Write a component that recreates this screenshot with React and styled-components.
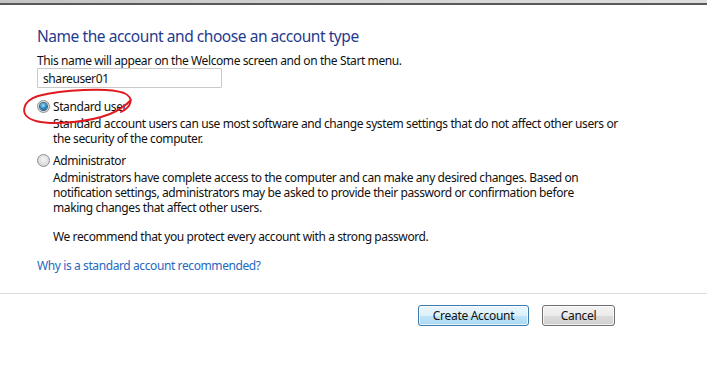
import React from "react";
import styled, { createGlobalStyle } from "styled-components";

const GlobalStyle = createGlobalStyle`
  html, body {
    margin: 0;
    padding: 0;
    background: #ffffff;
  }
  body {
    font-family: "Noto Sans", "Open Sans", "Liberation Sans", sans-serif;
    font-size: 12px;
    color: #111;
  }
`;

const Page = styled.div`
  position: relative;
  width: 707px;
  height: 377px;
  overflow: hidden;
  background: #fff;
`;

const TopEdge = styled.div`
  height: 3px;
  background: linear-gradient(to right, #c4c4c4, #d6d6d6 60%, #dedede);
  border-bottom: 2px solid #595959;
`;

const Content = styled.div`
  padding: 21px 0 0 37px;
  display: flex;
  flex-direction: column;
  align-items: flex-start;
`;

const Title = styled.h1`
  margin: 0;
  font-size: 15.5px;
  font-weight: 400;
  line-height: 21px;
  color: #1f3b8e;
  letter-spacing: -0.45px;
`;

const Hint = styled.p`
  margin: 6px 0 0;
  line-height: 15px;
  letter-spacing: -0.4px;
`;

const NameInput = styled.input`
  box-sizing: border-box;
  margin-top: 0;
  width: 185px;
  height: 20px;
  padding: 0 5px;
  border: 1px solid #c9c9c9;
  border-radius: 1px;
  font: inherit;
  letter-spacing: -0.4px;
  color: #111;
  outline: none;
`;

const Option = styled.div`
  display: flex;
  flex-direction: column;
  margin-top: ${(p) => p.$gap}px;
`;

const RadioRow = styled.label`
  display: flex;
  align-items: center;
  gap: 3px;
  line-height: 15px;
  letter-spacing: -0.4px;
`;

const Radio = styled.span`
  box-sizing: border-box;
  width: 13px;
  height: 13px;
  border-radius: 50%;
  border: 1px solid #8e8f8f;
  background: radial-gradient(circle at 50% 40%, #f4f4f4, #d5d5d5 80%);
  display: flex;
  align-items: center;
  justify-content: center;

  &::after {
    content: "";
    width: 7px;
    height: 7px;
    border-radius: 50%;
    display: ${(p) => (p.$checked ? "block" : "none")};
    background: radial-gradient(circle at 45% 35%, #a6e3f7, #1b7fc0 55%, #0d4a7e);
    box-shadow: 0 0 0 1px #3a5f80;
  }
`;

const Desc = styled.p`
  margin: 2px 0 0 16px;
  line-height: 15px;
  letter-spacing: -0.4px;
`;

const Note = styled.p`
  margin: 14px 0 0 16px;
  line-height: 15px;
  letter-spacing: -0.4px;
`;

const HelpLink = styled.a`
  margin-top: 14px;
  line-height: 15px;
  letter-spacing: -0.4px;
  color: #2767bf;
  text-decoration: none;
  cursor: pointer;
`;

const Divider = styled.hr`
  margin: 20px 0 0;
  border: 0;
  border-top: 1px solid #dcdcdc;
`;

const ButtonBar = styled.div`
  display: flex;
  justify-content: flex-end;
  gap: 13px;
  padding: 11px 92px 0 0;
`;

const Button = styled.button`
  box-sizing: border-box;
  height: 21px;
  min-width: ${(p) => p.$width}px;
  padding: 0 10px;
  border-radius: 3px;
  font: inherit;
  letter-spacing: -0.3px;
  color: #111;
  border: 1px solid ${(p) => (p.$primary ? "#3d7bad" : "#707070")};
  background: ${(p) =>
    p.$primary
      ? "linear-gradient(#ebf6fd, #dcf1fc 50%, #c1e5f8 50%, #aad8f1)"
      : "linear-gradient(#f3f3f3, #ebebeb 50%, #dddddd 50%, #cfcfcf)"};
  box-shadow: inset 0 0 0 1px rgba(255, 255, 255, 0.7);
`;

const Scribble = styled.svg`
  position: absolute;
  left: 0;
  top: 0;
  pointer-events: none;
`;

export default function App() {
  return (
    <Page>
      <GlobalStyle />
      <TopEdge />
      <Content>
        <Title>Name the account and choose an account type</Title>
        <Hint>This name will appear on the Welcome screen and on the Start menu.</Hint>
        <NameInput defaultValue="shareuser01" />

        <Option $gap={11}>
          <RadioRow>
            <Radio $checked />
            Standard user
          </RadioRow>
          <Desc>
            Standard account users can use most software and change system settings that do not affect other users or
            <br />
            the security of the computer.
          </Desc>
        </Option>

        <Option $gap={7}>
          <RadioRow>
            <Radio />
            Administrator
          </RadioRow>
          <Desc>
            Administrators have complete access to the computer and can make any desired changes. Based on
            <br />
            notification settings, administrators may be asked to provide their password or confirmation before
            <br />
            making changes that affect other users.
          </Desc>
        </Option>

        <Note>We recommend that you protect every account with a strong password.</Note>
        <HelpLink>Why is a standard account recommended?</HelpLink>
      </Content>

      <Divider />
      <ButtonBar>
        <Button $primary $width={111}>Create Account</Button>
        <Button $width={73}>Cancel</Button>
      </ButtonBar>

      <Scribble width="707" height="377" viewBox="0 0 707 377">
        <path
          d="M 121 112 C 131 107, 135 98, 124 93 C 108 87, 62 90, 38 96 C 22 101, 18 116, 36 121 C 56 126, 92 121, 110 114 C 120 110, 127 104, 131 100"
          fill="none"
          stroke="#e01a1f"
          strokeWidth="1.9"
          strokeLinecap="round"
        />
      </Scribble>
    </Page>
  );
}
